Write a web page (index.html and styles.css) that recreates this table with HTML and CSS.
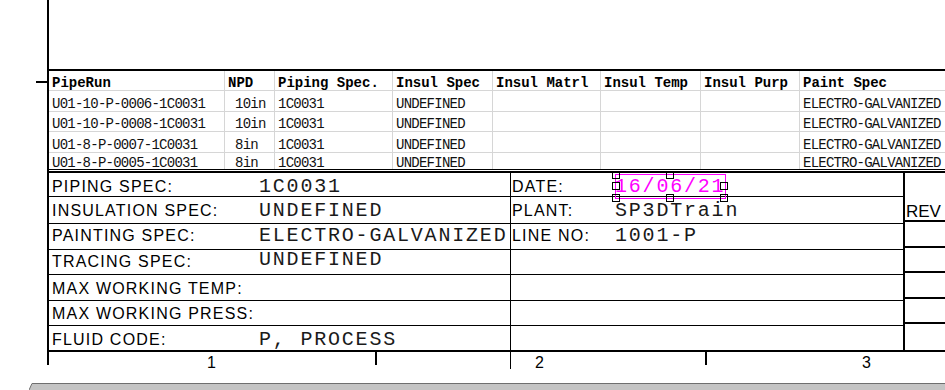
FILE: index.html
```html
<!DOCTYPE html>
<html lang="en">
<head>
<meta charset="utf-8">
<title>Pipe Run Sheet</title>
<link rel="stylesheet" href="styles.css">
</head>
<body>
<div class="page">
  <div class="gutter"><div class="tick"></div></div>
  <div class="sheet">
    <div class="blank"></div>

    <div class="runs">
      <div class="tr th">
        <div class="c">PipeRun</div>
        <div class="c">NPD</div>
        <div class="c">Piping Spec.</div>
        <div class="c">Insul Spec</div>
        <div class="c">Insul Matrl</div>
        <div class="c">Insul Temp</div>
        <div class="c">Insul Purp</div>
        <div class="c">Paint Spec</div>
      </div>
      <div class="tr td r1">
        <div class="c">U01-10-P-0006-1C0031</div>
        <div class="c npd">10in</div>
        <div class="c">1C0031</div>
        <div class="c">UNDEFINED</div>
        <div class="c"></div>
        <div class="c"></div>
        <div class="c"></div>
        <div class="c">ELECTRO-GALVANIZED</div>
      </div>
      <div class="tr td r2">
        <div class="c">U01-10-P-0008-1C0031</div>
        <div class="c npd">10in</div>
        <div class="c">1C0031</div>
        <div class="c">UNDEFINED</div>
        <div class="c"></div>
        <div class="c"></div>
        <div class="c"></div>
        <div class="c">ELECTRO-GALVANIZED</div>
      </div>
      <div class="tr td r3">
        <div class="c">U01-8-P-0007-1C0031</div>
        <div class="c npd">8in</div>
        <div class="c">1C0031</div>
        <div class="c">UNDEFINED</div>
        <div class="c"></div>
        <div class="c"></div>
        <div class="c"></div>
        <div class="c">ELECTRO-GALVANIZED</div>
      </div>
      <div class="tr td r4">
        <div class="c">U01-8-P-0005-1C0031</div>
        <div class="c npd">8in</div>
        <div class="c">1C0031</div>
        <div class="c">UNDEFINED</div>
        <div class="c"></div>
        <div class="c"></div>
        <div class="c"></div>
        <div class="c">ELECTRO-GALVANIZED</div>
      </div>
    </div>

    <div class="title">
      <div class="fields">
        <div class="frow f1">
          <div class="fl"><span class="lbl">PIPING SPEC:</span><span class="val">1C0031</span></div>
          <div class="fr"><span class="lbl">DATE:</span><span class="val date">16/06/21<span class="sel"><i class="h tl"></i><i class="h tm"></i><i class="h tr"></i><i class="h ml"></i><i class="h mr"></i><i class="h bl"></i><i class="h bm"></i><i class="h br"></i></span></span></div>
        </div>
        <div class="frow f2">
          <div class="fl"><span class="lbl">INSULATION SPEC:</span><span class="val">UNDEFINED</span></div>
          <div class="fr"><span class="lbl">PLANT:</span><span class="val">SP3DTrain</span></div>
        </div>
        <div class="frow f3">
          <div class="fl"><span class="lbl">PAINTING SPEC:</span><span class="val">ELECTRO-GALVANIZED</span></div>
          <div class="fr"><span class="lbl">LINE NO:</span><span class="val">1001-P</span></div>
        </div>
        <div class="frow f4">
          <div class="fl"><span class="lbl">TRACING SPEC:</span><span class="val raised">UNDEFINED</span></div>
          <div class="fr"></div>
        </div>
        <div class="frow f5">
          <div class="fl"><span class="lbl">MAX WORKING TEMP:</span></div>
          <div class="fr"></div>
        </div>
        <div class="frow f6">
          <div class="fl"><span class="lbl">MAX WORKING PRESS:</span></div>
          <div class="fr"></div>
        </div>
        <div class="frow f7">
          <div class="fl"><span class="lbl">FLUID CODE:</span><span class="val">P, PROCESS</span></div>
          <div class="fr"></div>
        </div>
      </div>
      <div class="rev">
        <div class="rc rc1">REV</div>
        <div class="rc rc2"></div>
        <div class="rc rc3"></div>
        <div class="rc rc4"></div>
        <div class="rc rc5"></div>
        <div class="rc rc6"></div>
      </div>
    </div>

    <div class="scale">
      <div class="zone z1">1</div>
      <div class="mark"></div>
      <div class="zone"></div>
      <div class="divider"></div>
      <div class="zone z2">2</div>
      <div class="mark"></div>
      <div class="zone z3">3</div>
    </div>
  </div>
</div>

<div class="tabs">
  <svg class="tabbar" width="916" height="7" viewBox="0 0 916 7">
    <polygon points="3,0.5 916,0.5 916,7 0,7" fill="#c4c4c4"/>
    <polyline points="0,7 3,0.5 916,0.5" fill="none" stroke="#6f6f6f" stroke-width="1"/>
  </svg>
</div>
</body>
</html>
```

FILE: styles.css
```css
html, body {
  margin: 0;
  padding: 0;
}

body {
  width: 945px;
  height: 390px;
  overflow: hidden;
  background: #fff;
  color: #000;
  font-family: "Liberation Sans", Arial, sans-serif;
}

/* drawing frame */
.page {
  display: flex;
  height: 370px;
}

.gutter {
  flex: 0 0 49px;
  box-sizing: border-box;
  height: 365px;
  border-right: 2px solid #000;
}

.tick {
  margin: 81px 0 0 36px;
  width: 11px;
  height: 2px;
  background: #000;
}

.sheet {
  flex: 1;
  min-width: 0;
  display: flex;
  flex-direction: column;
}

.blank {
  height: 70px;
}

/* pipe run spreadsheet */
.runs {
  display: grid;
  grid-template-columns: 175px 49px 117px 99px 107px 99px 98px 1fr;
  grid-template-rows: 19px 20px 19px 20px 16px;
  gap: 1px;
  background: #d6d6d6;
  border-top: 2px solid #000;
  border-bottom: 1px solid #000;
}

.tr {
  display: contents;
}

.c {
  background: #fff;
  padding-left: 3px;
  white-space: nowrap;
  font-family: "Liberation Mono", "Courier New", monospace;
}

.th .c {
  font-size: 14px;
  font-weight: bold;
  line-height: 16px;
  padding-top: 4px;
  overflow: hidden;
}

.td .c {
  font-size: 14px;
  letter-spacing: -0.75px;
  line-height: 13px;
  color: #111;
}

.r1 .c { padding-top: 7px; }
.r2 .c { padding-top: 6px; }
.r3 .c { padding-top: 7px; }
.r4 .c { padding-top: 4px; }

.td .npd {
  padding-left: 10px;
}

/* title block */
.title {
  display: grid;
  grid-template-columns: 856px 1fr;
  margin-top: 1px;
  border-top: 2px solid #000;
  border-bottom: 2px solid #000;
}

.fields {
  border-right: 2px solid #000;
}

.frow {
  display: grid;
  grid-template-columns: 462px 1fr;
  border-bottom: 1px solid #000;
}

.frow:last-child {
  border-bottom: 0;
}

.f1 { height: 23px; }
.f2 { height: 26px; }
.f3 { height: 25px; }
.f4 { height: 24px; }
.f5 { height: 25px; }
.f6 { height: 24px; }
.f7 { height: 24px; }

.fl,
.fr {
  box-sizing: border-box;
  display: grid;
  align-items: start;
  white-space: nowrap;
  line-height: 18px;
}

.fl {
  grid-template-columns: 207px 1fr;
  padding-left: 3px;
  border-right: 1px solid #000;
}

.fr {
  grid-template-columns: 103px 1fr;
  padding-left: 1px;
}

.f1 .fl, .f1 .fr { padding-top: 5px; }
.f2 .fl, .f2 .fr { padding-top: 5px; }
.f3 .fl, .f3 .fr { padding-top: 3px; }
.f4 .fl, .f4 .fr { padding-top: 3px; }
.f5 .fl, .f5 .fr { padding-top: 5px; }
.f6 .fl, .f6 .fr { padding-top: 4px; }
.f7 .fl, .f7 .fr { padding-top: 5px; }

.lbl {
  font-size: 16px;
  letter-spacing: 1.2px;
}

.val {
  font-family: "Liberation Mono", "Courier New", monospace;
  font-size: 20px;
  letter-spacing: 1.8px;
  line-height: 18px;
  color: #1a1a1a;
}

.raised {
  margin-top: -2px;
}

.date {
  position: relative;
  justify-self: start;
  color: #f0f;
}

/* selected text object with grips */
.sel {
  position: absolute;
  left: 0;
  top: -4px;
  width: 111px;
  height: 25px;
  box-sizing: border-box;
  border: 1px solid #f0f;
}

.h {
  position: absolute;
  width: 8px;
  height: 8px;
  box-sizing: border-box;
  border: 1px solid #000;
}

.tl { left: -4px; top: -4px; }
.tm { left: 50px; top: -4px; }
.tr { left: 104px; top: -4px; }
.ml { left: -4px; top: 7px; }
.mr { left: 104px; top: 7px; }
.bl { left: -4px; top: 19px; }
.bm { left: 50px; top: 19px; }
.br { left: 104px; top: 19px; }

/* revision column */
.rev {
  display: flex;
  flex-direction: column;
}

.rc {
  border-bottom: 2px solid #000;
}

.rc6 {
  border-bottom: 0;
}

.rc1 {
  height: 49px;
  box-sizing: border-box;
  padding: 29px 0 0 1px;
  font-size: 17px;
  line-height: 19px;
  white-space: nowrap;
}

.rc2 { height: 24px; }
.rc3 { height: 23px; }
.rc4 { height: 24px; }
.rc5 { height: 23px; }
.rc6 { height: 24px; }

/* zone numbering strip */
.scale {
  display: grid;
  grid-template-columns: 326px 2px 133px 1px 194px 2px 1fr;
  height: 18px;
  align-items: start;
  font-size: 16px;
  line-height: 18px;
}

.zone {
  padding-top: 2px;
  white-space: nowrap;
}

.z1 { padding-left: 158px; }
.z2 { padding-left: 24px; }
.z3 { padding-left: 155px; }

.mark {
  height: 13px;
  background: #000;
}

.divider {
  height: 17px;
  background: #000;
}

/* sheet tab strip */
.tabs {
  height: 20px;
  padding-left: 29px;
}

.tabbar {
  display: block;
  margin-top: 13px;
}
```
